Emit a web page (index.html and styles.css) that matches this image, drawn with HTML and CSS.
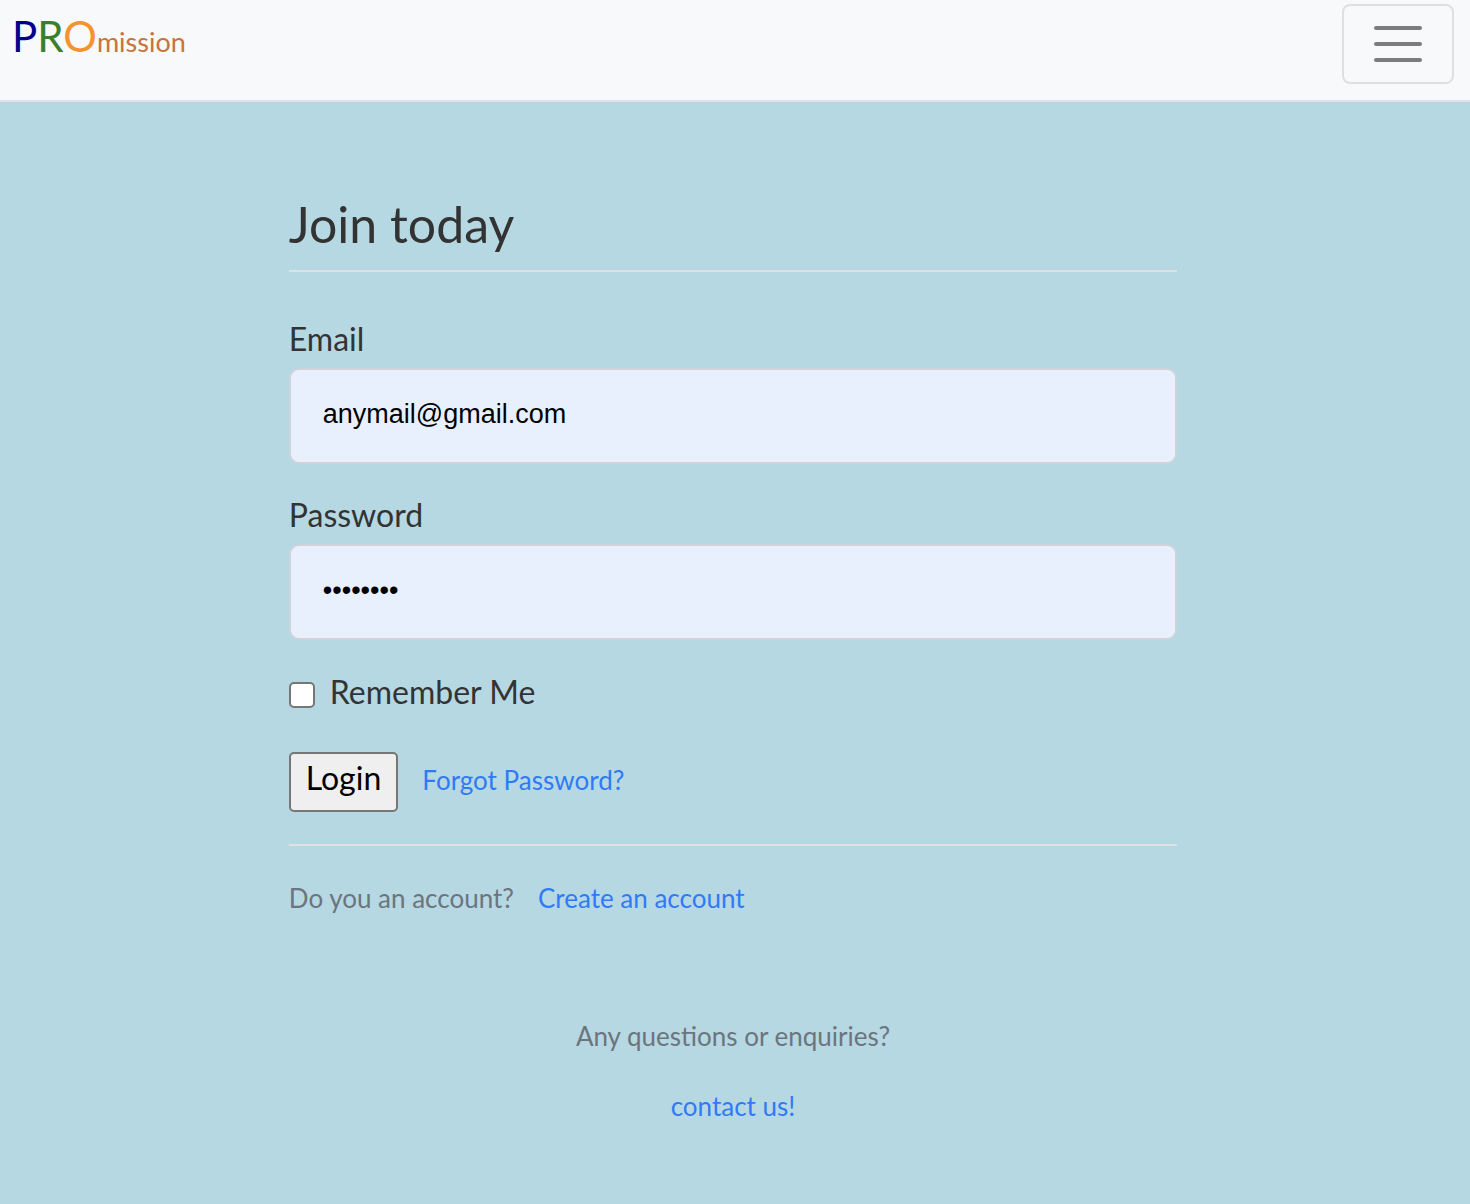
FILE: index.html
```html
<!DOCTYPE html>
<html lang="en">
<head>
<meta charset="utf-8">
<meta name="viewport" content="width=device-width, initial-scale=1">
<title>PROmission</title>
<link rel="stylesheet" href="styles.css">
</head>
<body>
<header class="navbar">
  <a class="brand" href="#"><span class="brand-large brand-p">P</span><span class="brand-large brand-r">R</span><span class="brand-large brand-o">O</span>mission</a>
  <button class="toggler" type="button" aria-label="Toggle navigation">
    <svg width="60" height="60" viewBox="0 0 30 30" aria-hidden="true"><path d="M4 7h22M4 15h22M4 23h22" stroke="#7b7c7c" stroke-width="2" stroke-linecap="round" stroke-miterlimit="10"/></svg>
  </button>
</header>
<div class="page">
  <main class="content">
    <form class="login">
      <h1 class="title">Join today</h1>
      <div class="field">
        <label class="label" for="email">Email</label>
        <input class="input" id="email" type="email" value="anymail@gmail.com">
      </div>
      <div class="field">
        <label class="label" for="password">Password</label>
        <input class="input" id="password" type="password" value="password">
      </div>
      <div class="remember">
        <input class="check" id="remember" type="checkbox">
        <label for="remember">Remember Me</label>
      </div>
      <div class="actions">
        <button class="submit" type="submit">Login</button>
        <a class="link" href="#">Forgot Password?</a>
      </div>
    </form>
    <p class="signup">Do you an account? <a class="link" href="#">Create an account</a></p>
  </main>
  <footer class="footer">
    <p class="question">Any questions or enquiries?</p>
    <a class="link" href="#">contact us!</a>
  </footer>
</div>
</body>
</html>
```
FILE: styles.css
```css
* { box-sizing: border-box; }

body {
  margin: 0;
  background: #b6d8e3;
  color: #333;
  font-family: Papyrus, Lato, sans-serif;
  font-size: 32px;
  line-height: 48px;
}

h1, p { margin: 0; font-weight: 400; }

a { text-decoration: none; }

.navbar {
  display: flex;
  justify-content: space-between;
  align-items: flex-start;
  padding: 4px 16px 16px 12px;
  background: #f8f9fb;
  border-bottom: 2px solid #dee2e6;
}

.brand {
  padding-top: 8px;
  color: #c8733a;
  font-size: 27px;
}

.brand-large { font-size: 42px; }
.brand-p { color: #00008b; }
.brand-r { color: #38802a; }
.brand-o { color: #f59331; }

.toggler {
  display: flex;
  align-items: center;
  justify-content: center;
  width: 112px;
  height: 80px;
  padding: 0;
  background: transparent;
  border: 2px solid #dedfe1;
  border-radius: 8px;
}

.page { padding-right: 4px; }

.content {
  width: 60.6%;
  margin: 0 auto;
  padding-top: 88px;
}

.title {
  padding: 4px 0 16px;
  border-bottom: 2px solid #dee2e6;
  font-size: 50px;
  line-height: 60px;
}

.field { margin-top: 32px; }
.title + .field { margin-top: 48px; }

.label {
  display: block;
  padding-bottom: 10px;
  line-height: 38px;
}

.input {
  display: block;
  width: 100%;
  height: 96px;
  padding: 0 32px 4px;
  background: #e8f0fe;
  border: 2px solid #ced4da;
  border-radius: 10px;
  color: #000;
  font-family: "Liberation Sans", Arial, sans-serif;
  font-size: 27px;
}

.remember {
  display: flex;
  align-items: center;
  gap: 15px;
  margin-top: 28px;
}

.check {
  appearance: none;
  width: 26px;
  height: 26px;
  margin: 6px 0 0;
  background: #fff;
  border: 2px solid #767676;
  border-radius: 5px;
}

.actions {
  display: flex;
  align-items: baseline;
  gap: 24px;
  margin-top: 36px;
  padding-bottom: 32px;
  border-bottom: 2px solid #dee2e6;
}

.submit {
  height: 60px;
  padding: 0 15px 10px;
  background: #efefef;
  border: 2px solid #767676;
  border-radius: 5px;
  color: #000;
  font: inherit;
}

.link {
  color: #2f7bf6;
  font-size: 26px;
}

.signup {
  display: flex;
  gap: 24px;
  padding-top: 28px;
  color: #6c757d;
  font-size: 26px;
}

.footer {
  padding: 90px 0 72px;
  text-align: center;
}

.question {
  margin-bottom: 20px;
  color: #6c757d;
  font-size: 26px;
}
```
